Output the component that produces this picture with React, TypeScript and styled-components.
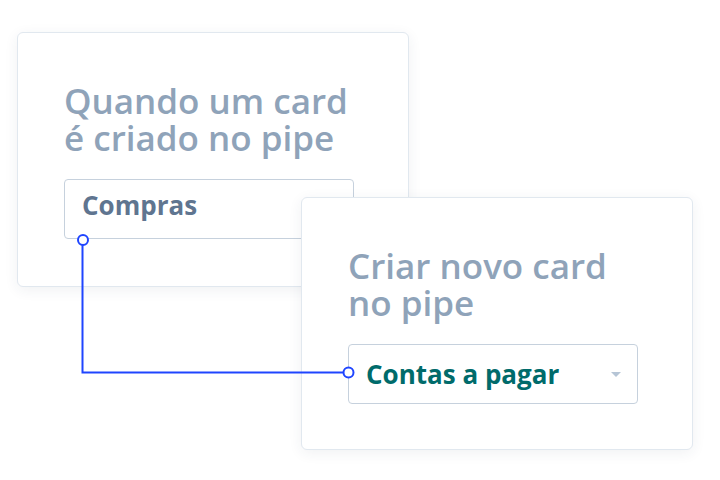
import styled, { createGlobalStyle } from 'styled-components';

const GlobalStyle = createGlobalStyle`
    html, body {
        margin: 0;
        padding: 0;
        background: #ffffff;
    }
    body {
        font-family: 'Open Sans', 'Lato', sans-serif;
    }
`;

function Connector() {
    return (
        <Wire width='720' height='480' viewBox='0 0 720 480' aria-hidden>
            <path d='M82.5 245 V372.5 H343' fill='none' stroke='#1f45ff' strokeWidth='2' />
            <circle cx='83' cy='240' r='5' fill='#ffffff' stroke='#1f45ff' strokeWidth='2' />
            <circle cx='348.5' cy='372.5' r='5' fill='#ffffff' stroke='#1f45ff' strokeWidth='2' />
        </Wire>
    );
}

function App() {
    return (
        <>
            <GlobalStyle />
            <Stage>
                <TriggerCard>
                    <Title>
                        <Line>Quando um card</Line>
                        <Line>é criado no pipe</Line>
                    </Title>
                    <Field>
                        <FieldValue tone='slate'>Compras</FieldValue>
                    </Field>
                </TriggerCard>
                <ActionCard>
                    <Title>
                        <Line>Criar novo card</Line>
                        <Line>no pipe</Line>
                    </Title>
                    <Field>
                        <FieldValue tone='teal'>Contas a pagar</FieldValue>
                        <Caret />
                    </Field>
                </ActionCard>
                <Connector />
            </Stage>
        </>
    );
}

export default App;

const Stage = styled.div`
    position: relative;
    width: 720px;
    height: 480px;
    box-sizing: border-box;
    padding: 32px 0 0 17px;
    display: grid;
    grid-template-columns: 284px 108px 284px;
    grid-template-rows: 165px 90px 163px;
    overflow: hidden;
`;

const Card = styled.div`
    box-sizing: border-box;
    background: #ffffff;
    border: 1px solid #e1e8ef;
    border-radius: 6px;
    box-shadow: 0 3px 14px rgba(40, 60, 90, 0.07);
    display: flex;
    flex-direction: column;
`;

const TriggerCard = styled(Card)`
    grid-column: 1 / 3;
    grid-row: 1 / 3;
    padding: 49px 0 0 46px;
`;

const ActionCard = styled(Card)`
    grid-column: 2 / 4;
    grid-row: 2 / 4;
    padding: 49px 0 0 46px;
    z-index: 1;
`;

const Title = styled.h2`
    margin: 0;
    font-size: 35px;
    font-weight: 600;
    color: #8fa3b9;
    letter-spacing: 0;
    display: flex;
    flex-direction: column;
`;

const Line = styled.span`
    display: block;
    height: 37px;
    line-height: 37px;
    white-space: nowrap;
`;

const Field = styled.div`
    margin-top: 23px;
    width: 290px;
    height: 60px;
    box-sizing: border-box;
    border: 1px solid #c6d1dd;
    border-radius: 4px;
    display: flex;
    align-items: center;
    justify-content: space-between;
    padding: 0 16px 0 17px;
`;

const FieldValue = styled.span<{ tone: 'slate' | 'teal' }>`
    font-size: 26px;
    font-weight: 700;
    letter-spacing: 0;
    color: ${(props) => (props.tone === 'teal' ? '#006b6b' : '#5f7590')};
    margin-top: ${(props) => (props.tone === 'teal' ? '0' : '-8px')};
`;

const Caret = styled.span`
    width: 0;
    height: 0;
    border-left: 5px solid transparent;
    border-right: 5px solid transparent;
    border-top: 5px solid #b6c5d6;
`;

const Wire = styled.svg`
    position: absolute;
    inset: 0;
    z-index: 2;
    pointer-events: none;
`;
